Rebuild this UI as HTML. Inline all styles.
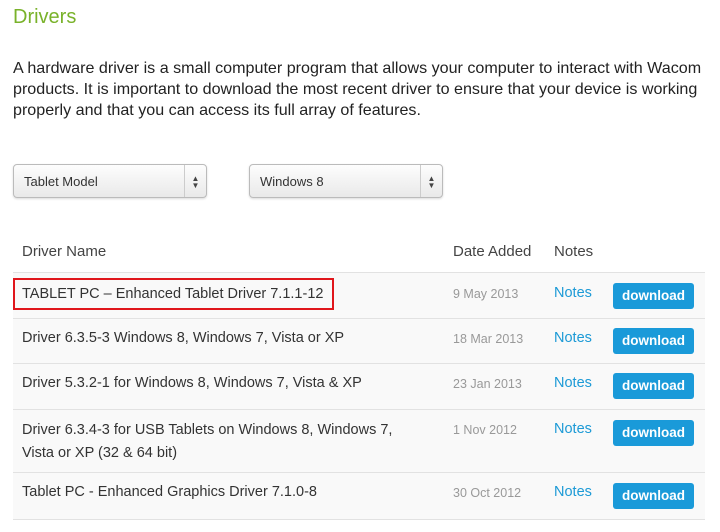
<!DOCTYPE html>
<html><head><style>
body{margin:0;width:720px;height:532px;background:#fff;font-family:"Liberation Sans",Arial,sans-serif;color:#333;overflow:hidden;position:relative}
.abs{position:absolute}
h1{position:absolute;left:13px;top:6px;margin:0;font-size:20px;font-weight:normal;color:#79b22a}
p{position:absolute;left:13px;top:58px;margin:0;width:710px;font-size:16.1px;line-height:21px;color:#222}
.sel{position:absolute;top:164px;width:192px;height:32px;border:1px solid #bbb;border-radius:4px;background:linear-gradient(#fdfdfd,#e9e9e9);box-shadow:0 1px 2px rgba(0,0,0,.15);font-size:13px;color:#333}
.sel span{position:absolute;left:10px;top:9px}
.sel i{position:absolute;right:0;top:0;width:22px;height:32px;border-left:1px solid #ccc;font-style:normal;font-size:8px;line-height:7px;text-align:center;padding-top:10px;box-sizing:border-box;color:#444}
.hd{position:absolute;top:243px;font-size:15px;color:#444}
.row{position:absolute;left:13px;width:692px;background:#f9f9f9;border-top:1px solid #e2e2e2}
.row .n{position:absolute;left:9px;font-size:14.5px;color:#333;line-height:27px}
.row .d{position:absolute;left:440px;font-size:12.5px;color:#999}
.row .o{position:absolute;left:541px;font-size:14.5px;color:#1c9ad6}
.row .b{position:absolute;left:600px;width:81px;height:26px;background:#1a9ad9;border-radius:3px;color:#fff;font-weight:bold;font-size:13.5px;text-align:center;line-height:26px}
</style></head><body>
<h1>Drivers</h1>
<p>A hardware driver is a small computer program that allows your computer to interact with Wacom products. It is important to download the most recent driver to ensure that your device is working properly and that you can access its full array of features.</p>
<div class="sel" style="left:13px"><span>Tablet Model</span><i>▲<br>▼</i></div>
<div class="sel" style="left:249px"><span>Windows 8</span><i>▲<br>▼</i></div>
<div class="hd" style="left:22px">Driver Name</div>
<div class="hd" style="left:453px">Date Added</div>
<div class="hd" style="left:554px">Notes</div>

<div class="row" style="top:272px;height:46px"><div class="n" style="top:8px">TABLET PC – Enhanced Tablet Driver 7.1.1-12</div><div class="d" style="top:14px">9 May 2013</div><div class="o" style="top:12px">Notes</div><div class="b" style="top:10px">download</div></div>
<div class="abs" style="left:13px;top:278px;width:317px;height:28px;border:2.5px solid #e0161c"></div>
<div class="row" style="top:318px;height:45px"><div class="n" style="top:6px">Driver 6.3.5-3 Windows 8, Windows 7, Vista or XP</div><div class="d" style="top:13px">18 Mar 2013</div><div class="o" style="top:11px">Notes</div><div class="b" style="top:9px">download</div></div>
<div class="row" style="top:363px;height:46px"><div class="n" style="top:6px">Driver 5.3.2-1 for Windows 8, Windows 7, Vista &amp; XP</div><div class="d" style="top:13px">23 Jan 2013</div><div class="o" style="top:11px">Notes</div><div class="b" style="top:9px">download</div></div>
<div class="row" style="top:409px;height:63px"><div class="n" style="top:9px;width:400px;line-height:23px">Driver 6.3.4-3 for USB Tablets on Windows 8, Windows 7, Vista or XP (32 &amp; 64 bit)</div><div class="d" style="top:13px">1 Nov 2012</div><div class="o" style="top:11px">Notes</div><div class="b" style="top:10px">download</div></div>
<div class="row" style="top:472px;height:46px;border-bottom:1px solid #e2e2e2"><div class="n" style="top:6px">Tablet PC - Enhanced Graphics Driver 7.1.0-8</div><div class="d" style="top:13px">30 Oct 2012</div><div class="o" style="top:11px">Notes</div><div class="b" style="top:10px">download</div></div>
</body></html>
